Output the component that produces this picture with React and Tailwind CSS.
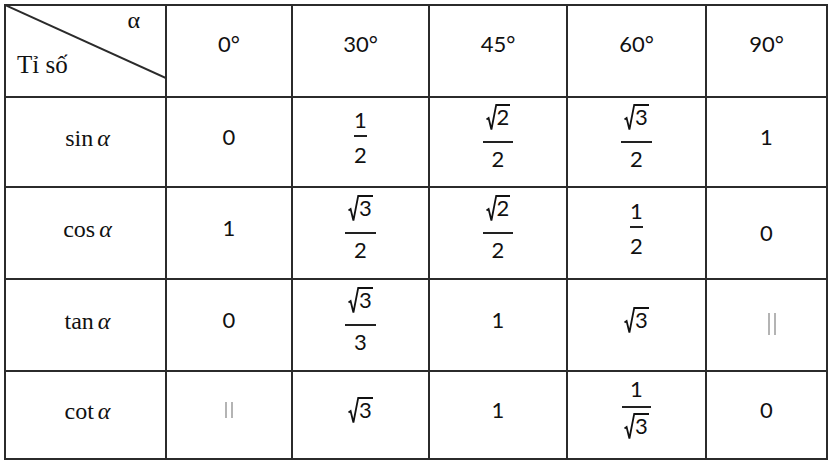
import React from 'react';

const Sqrt = ({ children, className = '' }) => (
  <span className={`inline-flex items-start ${className}`}>
    <svg width="11" height="27" viewBox="0 0 11 27" className="shrink-0">
      <path d="M0.5 15.5 L2.6 14 L5.4 25.5 L10.2 1 L11 1" fill="none" stroke="#111" strokeWidth="1.8" />
    </svg>
    <span className="border-t-2 border-[#111] pr-[1px] pb-[3px] leading-none">{children}</span>
  </span>
);

const Frac = ({ num, den, numClass = 'mb-[4px]', denClass = 'mt-[7px]' }) => (
  <span className="inline-flex flex-col items-center leading-none">
    <span className={numClass}>{num}</span>
    <span className="h-[2px] self-stretch bg-[#222]" />
    <span className={denClass}>{den}</span>
  </span>
);

const Undef = ({ className }) => (
  <span className={`flex gap-[4px] ${className}`}>
    <span className="w-[2px] bg-[#b4b4b4]" />
    <span className="w-[2px] bg-[#b4b4b4]" />
  </span>
);

const Cell = ({ children }) => (
  <div className="bg-white flex items-center justify-center pb-[10px] text-[22px] leading-none text-[#111] font-['Lato','Liberation_Sans',sans-serif]">
    {children}
  </div>
);

const Head = ({ children }) => (
  <div className="bg-white flex items-center justify-center pb-[14px] text-[22px] leading-none text-[#111] font-['Lato','Liberation_Sans',sans-serif]">
    {children}
  </div>
);

const Label = ({ fn }) => (
  <div className="bg-white flex items-center justify-center pb-[8px] pl-[4px] text-[24px] leading-none text-[#111] font-['Liberation_Serif',serif]">
    <span>{fn}</span>
    <span className="italic ml-[4px]">α</span>
  </div>
);

const sqNum = 'mb-[7px] px-[3px]';
const sqDen = 'mt-[5px]';

export default function App() {
  return (
    <div className="w-[839px] h-[469px] bg-white">
      <div className="ml-[4px] mt-[4px] inline-grid grid-cols-[159px_124px_135px_136px_137px_119px] grid-rows-[90px_88px_90px_90px_86px] gap-[2px] border-2 border-[#2b2b2b] bg-[#2b2b2b]">
        {/* header */}
        <div className="relative bg-white flex flex-col pt-[2px] font-['Liberation_Serif',serif] text-[#111] leading-none">
          <svg className="absolute left-0 top-0" width="159" height="90" viewBox="0 0 159 90">
            <line x1="-1" y1="-1" x2="160" y2="72" stroke="#2b2b2b" strokeWidth="2" />
          </svg>
          <span className="self-end mr-[25px] text-[24px]">α</span>
          <span className="ml-[11px] mt-[20px] text-[25px]">Tỉ số</span>
        </div>
        <Head>0°</Head>
        <Head>30°</Head>
        <Head>45°</Head>
        <Head>60°</Head>
        <Head>90°</Head>

        {/* sin */}
        <Label fn="sin" />
        <Cell>0</Cell>
        <Cell><Frac num="1" den="2" /></Cell>
        <Cell><Frac num={<Sqrt>2</Sqrt>} den="2" numClass={sqNum} denClass={sqDen} /></Cell>
        <Cell><Frac num={<Sqrt>3</Sqrt>} den="2" numClass={sqNum} denClass={sqDen} /></Cell>
        <Cell>1</Cell>

        {/* cos */}
        <Label fn="cos" />
        <Cell>1</Cell>
        <Cell><Frac num={<Sqrt>3</Sqrt>} den="2" numClass={sqNum} denClass={sqDen} /></Cell>
        <Cell><Frac num={<Sqrt>2</Sqrt>} den="2" numClass={sqNum} denClass={sqDen} /></Cell>
        <Cell><Frac num="1" den="2" /></Cell>
        <Cell><span className="mt-[10px]">0</span></Cell>

        {/* tan */}
        <Label fn="tan" />
        <Cell>0</Cell>
        <Cell><Frac num={<Sqrt>3</Sqrt>} den="3" numClass={sqNum} denClass={sqDen} /></Cell>
        <Cell>1</Cell>
        <Cell><Sqrt>3</Sqrt></Cell>
        <Cell><Undef className="h-[22px] ml-[10px] mt-[8px]" /></Cell>

        {/* cot */}
        <Label fn="cot" />
        <Cell><Undef className="h-[16px]" /></Cell>
        <Cell><Sqrt>3</Sqrt></Cell>
        <Cell>1</Cell>
        <Cell><Frac num="1" den={<Sqrt className="px-[2px]">3</Sqrt>} numClass="mb-[6px]" denClass="mt-[5px]" /></Cell>
        <Cell>0</Cell>
      </div>
    </div>
  );
}
